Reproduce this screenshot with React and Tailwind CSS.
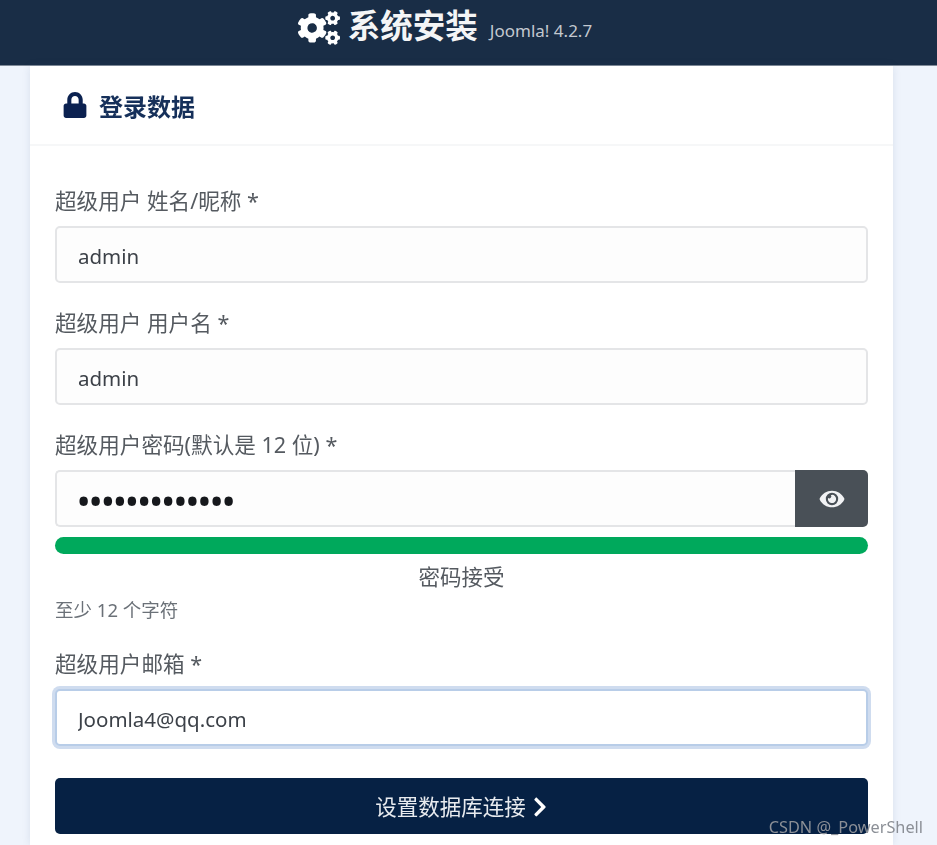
import { FaCogs, FaLock, FaEye, FaChevronRight } from "react-icons/fa";

const Field = ({ label, value, className = "" }) => (
	<div className={className}>
		<label className="block h-[26px] text-[21.6px] leading-[26px] text-[#555a60]">{label}</label>
		<input
			readOnly
			value={value}
			className="mt-[12px] block w-full h-[57px] px-[21px] pt-[3px] text-[20.5px] text-[#3c4148] bg-[#fdfdfd] border-2 border-[#e4e5e7] rounded-[5px] outline-none"
		/>
	</div>
);

export default function App() {
	return (
		<div className="relative h-[845px] overflow-hidden bg-[#eff4fc]">
			<div className="h-[845px] font-['Noto_Sans','Noto_Sans_CJK_SC',sans-serif] blur-[0.6px]">
				<header className="h-[66px] bg-[#192d46] border-b border-[#7f8a98] flex items-center justify-center pr-[47px]">
					<FaCogs className="text-white w-[42px] h-[34px] mb-[10px]" />
					<span className="ml-[8px] mb-[12px] text-[32.5px] font-bold text-[#f4f5f6]">系统安装</span>
					<span className="ml-[12px] mb-[4px] text-[17px] text-[#c3c8cf]">Joomla! 4.2.7</span>
				</header>
				<main className="ml-[30px] w-[863px] h-[779px] bg-white shadow-[0_0_8px_rgba(60,80,120,0.12)]">
					<div className="h-[80px] px-[33px] border-b-2 border-[#f6f7f8] flex items-center gap-[12px]">
						<FaLock className="text-[#0b2150] w-[24px] h-[26px]" />
						<h2 className="mt-[4px] text-[24px] font-bold text-[#16305a]">登录数据</h2>
					</div>
					<div className="px-[25px] pt-[42px]">
						<Field label="超级用户 姓名/昵称 *" value="admin" />
						<Field label="超级用户 用户名 *" value="admin" className="mt-[27px]" />
						<div className="mt-[27px]">
							<label className="block h-[26px] text-[21.6px] leading-[26px] text-[#555a60]">超级用户密码(默认是 12 位) *</label>
							<div className="mt-[12px] flex h-[57px]">
								<div className="flex-1 flex items-center px-[21px] pt-[4px] bg-[#fdfdfd] border-2 border-r-0 border-[#e4e5e7] rounded-l-[5px] text-[#16181c] text-[30px] font-bold tracking-[0.8px] overflow-hidden">
									•••••••••••••
								</div>
								<button className="w-[73px] flex items-center justify-center bg-[#495057] rounded-r-[5px]">
									<FaEye className="text-[#f1f2f4] w-[26px] h-[22px]" />
								</button>
							</div>
						</div>
						<div className="mt-[10px] h-[17px] rounded-full bg-[#00a95c]"></div>
						<p className="mt-[10px] h-[26px] text-center text-[21.5px] leading-[26px] text-[#555a60]">密码接受</p>
						<p className="mt-[9px] h-[22px] text-[18.5px] leading-[22px] text-[#6b7178]">至少 12 个字符</p>
						<div className="mt-[30px]">
							<label className="block h-[26px] text-[21.6px] leading-[26px] text-[#555a60]">超级用户邮箱 *</label>
							<input
								readOnly
								value="Joomla4@qq.com"
								className="mt-[12px] block w-full h-[57px] px-[21px] pt-[3px] text-[20.5px] text-[#3c4148] bg-white border-2 border-[#b8cde8] rounded-[5px] outline-none shadow-[0_0_0_3px_#cfdcef]"
							/>
						</div>
						<button className="mt-[32px] w-full h-[56px] pt-[2px] rounded-[5px] bg-[#062144] text-[#e8ebef] text-[21.5px] flex items-center justify-center gap-[6px]">
							设置数据库连接
							<FaChevronRight className="w-[16px] h-[22px] text-white" />
						</button>
					</div>
				</main>
			</div>
			<span className="absolute right-[14px] bottom-[6px] font-['Noto_Sans',sans-serif] text-[16.3px] text-[#8b8f96]">CSDN @_PowerShell</span>
		</div>
	);
}
